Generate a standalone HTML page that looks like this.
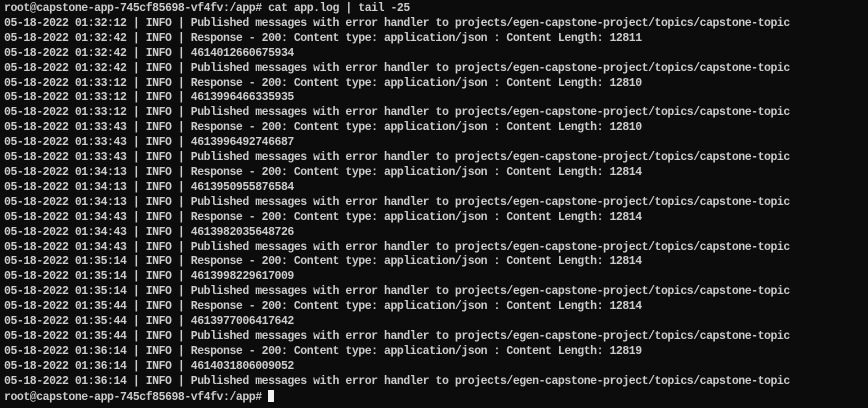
<!DOCTYPE html>
<html><head><meta charset="utf-8"><style>
html,body{margin:0;padding:0;background:#0c0c0c;width:868px;height:408px;overflow:hidden}
pre{margin:0;position:absolute;left:4px;top:2px;font-family:"Liberation Mono",monospace;font-size:11.5px;letter-spacing:-0.46px;line-height:14.9px;color:#cccccc;font-weight:bold}
.c{display:inline-block;width:6px;height:12px;background:#f2f2f2;vertical-align:-2px}
</style></head><body><pre>root@capstone-app-745cf85698-vf4fv:/app# cat app.log | tail -25
05-18-2022 01:32:12 | INFO | Published messages with error handler to projects/egen-capstone-project/topics/capstone-topic
05-18-2022 01:32:42 | INFO | Response - 200: Content type: application/json : Content Length: 12811
05-18-2022 01:32:42 | INFO | 4614012660675934
05-18-2022 01:32:42 | INFO | Published messages with error handler to projects/egen-capstone-project/topics/capstone-topic
05-18-2022 01:33:12 | INFO | Response - 200: Content type: application/json : Content Length: 12810
05-18-2022 01:33:12 | INFO | 4613996466335935
05-18-2022 01:33:12 | INFO | Published messages with error handler to projects/egen-capstone-project/topics/capstone-topic
05-18-2022 01:33:43 | INFO | Response - 200: Content type: application/json : Content Length: 12810
05-18-2022 01:33:43 | INFO | 4613996492746687
05-18-2022 01:33:43 | INFO | Published messages with error handler to projects/egen-capstone-project/topics/capstone-topic
05-18-2022 01:34:13 | INFO | Response - 200: Content type: application/json : Content Length: 12814
05-18-2022 01:34:13 | INFO | 4613950955876584
05-18-2022 01:34:13 | INFO | Published messages with error handler to projects/egen-capstone-project/topics/capstone-topic
05-18-2022 01:34:43 | INFO | Response - 200: Content type: application/json : Content Length: 12814
05-18-2022 01:34:43 | INFO | 4613982035648726
05-18-2022 01:34:43 | INFO | Published messages with error handler to projects/egen-capstone-project/topics/capstone-topic
05-18-2022 01:35:14 | INFO | Response - 200: Content type: application/json : Content Length: 12814
05-18-2022 01:35:14 | INFO | 4613998229617009
05-18-2022 01:35:14 | INFO | Published messages with error handler to projects/egen-capstone-project/topics/capstone-topic
05-18-2022 01:35:44 | INFO | Response - 200: Content type: application/json : Content Length: 12814
05-18-2022 01:35:44 | INFO | 4613977006417642
05-18-2022 01:35:44 | INFO | Published messages with error handler to projects/egen-capstone-project/topics/capstone-topic
05-18-2022 01:36:14 | INFO | Response - 200: Content type: application/json : Content Length: 12819
05-18-2022 01:36:14 | INFO | 4614031806009052
05-18-2022 01:36:14 | INFO | Published messages with error handler to projects/egen-capstone-project/topics/capstone-topic
root@capstone-app-745cf85698-vf4fv:/app# <span class="c"></span></pre></body></html>
